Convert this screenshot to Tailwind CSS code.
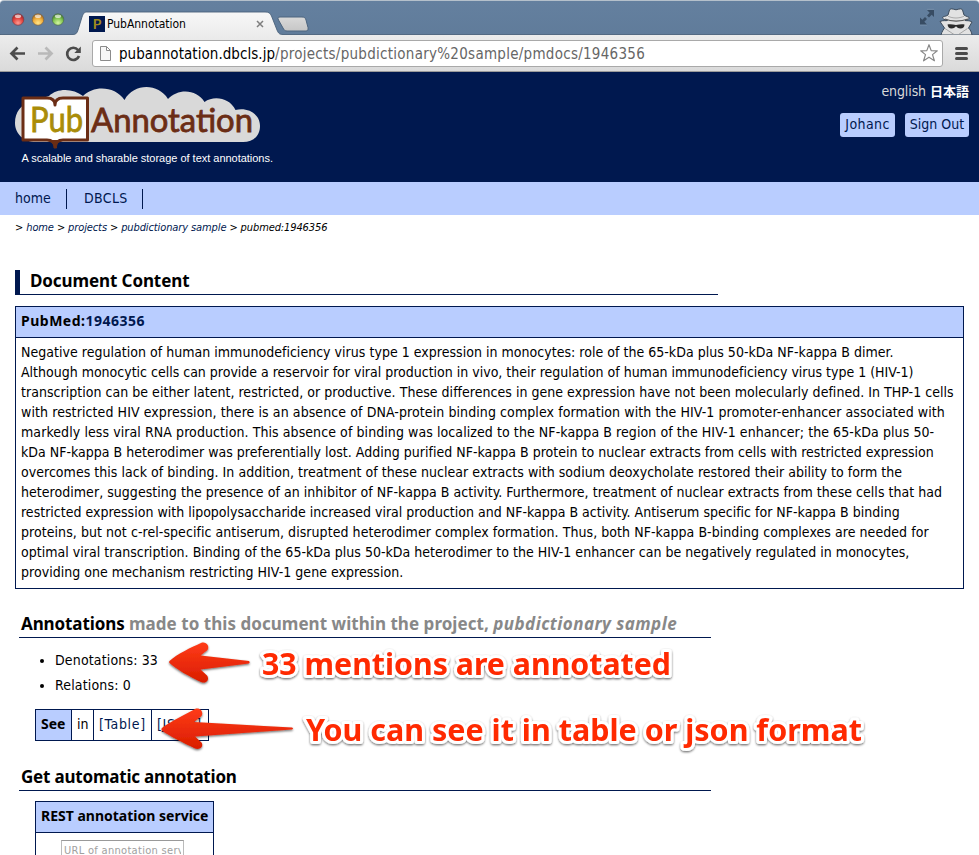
<!DOCTYPE html>
<html lang="en">
<head>
<meta charset="utf-8">
<title>PubAnnotation</title>
<script src="https://cdn.jsdelivr.net/npm/@tailwindcss/browser@4"></script>
</head>
<body class="bg-white">
<div class="relative w-[979px] h-[855px] overflow-hidden bg-white text-black text-[14px] leading-5 whitespace-nowrap font-['DejaVu_Sans_Condensed','DejaVu_Sans','Noto_Sans_CJK_JP',sans-serif]">

  <!-- Browser window -->
  <header class="bg-linear-to-b from-[#64809f] to-[#5c7795] border-t border-[#b4c0cb] rounded-t-[4px] h-[72px] flex flex-col">
    <div class="relative h-[34px] flex items-center">
      <svg class="block" width="979" height="34" viewBox="0 1 979 34">
        <defs>
          <linearGradient id="tab" x1="0" y1="0" x2="0" y2="1"><stop offset="0" stop-color="#f7f7f7"/><stop offset="1" stop-color="#ececec"/></linearGradient>
          <linearGradient id="nt" x1="0" y1="0" x2="0" y2="1"><stop offset="0" stop-color="#d9d9d9"/><stop offset="1" stop-color="#c6c6c6"/></linearGradient>
          <radialGradient id="r" cx=".5" cy=".8" r=".7"><stop offset="0" stop-color="#ff9a92"/><stop offset=".6" stop-color="#e2463f"/><stop offset="1" stop-color="#a3262a"/></radialGradient>
          <radialGradient id="y" cx=".5" cy=".8" r=".7"><stop offset="0" stop-color="#ffe58a"/><stop offset=".6" stop-color="#f0ae3c"/><stop offset="1" stop-color="#a96d1c"/></radialGradient>
          <radialGradient id="g" cx=".5" cy=".8" r=".7"><stop offset="0" stop-color="#d4f5a2"/><stop offset=".6" stop-color="#83c552"/><stop offset="1" stop-color="#44802a"/></radialGradient>
        </defs>
        <g stroke-width=".7">
          <circle cx="18" cy="19.5" r="5.8" fill="url(#r)" stroke="#7b3d49"/>
          <circle cx="38" cy="19.5" r="5.8" fill="url(#y)" stroke="#7d6446"/>
          <circle cx="58" cy="19.5" r="5.8" fill="url(#g)" stroke="#4d6e51"/>
        </g>
        <g fill="#fff" opacity=".65"><ellipse cx="18" cy="16.3" rx="3.2" ry="1.8"/><ellipse cx="38" cy="16.3" rx="3.2" ry="1.8"/><ellipse cx="58" cy="16.3" rx="3.2" ry="1.8"/></g>
        <path d="M0 34.5H73C76 34.5 77 33 78 30L82 17C83.5 13 84.500 12 87 12H265C269 12 270 13 271.500 16L277 30C278.500 33.500 279.500 34.500 283 34.500H979V36H0Z" fill="url(#tab)" stroke="#49617b" stroke-width=".9"/>
        <path d="M280 17H302C304.500 17 305.500 18 306 20L308 27.500C308.500 30 307.500 31 306 31H287C285 31 284 30 283 28L278.500 20C277.500 18 278 17 280 17Z" fill="url(#nt)" stroke="#4c647e"/>
        <path d="M257 21l6 6M263 21l-6 6" stroke="#7e7e7e" stroke-width="1.5"/>
        <g fill="#384c63"><path d="M927 10h7v7l-2.300-2.300-2.700 2.700-2-2 2.700-2.700z"/><path d="M920 24.500v-7l2.300 2.300 2.700-2.700 2 2-2.700 2.700 2.700 2.700z"/></g>
        <path d="M920 25.200h7M927 9.300h7" stroke="#8da3ba" stroke-width=".6" opacity=".6"/>
        <g>
          <path d="M941 35C942 31 944 29 944.500 28L940 21.500C943 20 946 21 947.500 20.500C943 19.500 941.500 17.500 943 17C945 16 947 16 948 15L949.500 10C950 8.500 952 8.600 956 9.800C960 8.600 962 8.500 962.500 10L964 15C966 16.500 969.500 17 969.500 18C969 19.500 966 20 965 20.500C967 21 969 20 972 22L968.500 28C970.500 30 971.500 32 972 35Z" fill="#e2e2e2" stroke="#3d4c5c" stroke-width="1"/>
          <path d="M948 16.200C953 18.600 959 18.600 964 16.200" fill="none" stroke="#9a9a9a" stroke-width=".8"/>
          <path d="M945 19C951 21.800 961 21.800 968 19" fill="none" stroke="#5a5a5a" stroke-width="1.300"/>
          <path d="M947.500 24.500C950 23.800 953 24.400 956 25C959 24.400 962 23.800 964.500 24.500C964.500 27.500 963 28.400 960.500 28.400C958 28.400 957 27 956 26.200C955 27 954 28.400 951.500 28.400C949 28.400 948 27.500 947.500 24.500Z" fill="#2b2b2b"/>
          <path d="M945 28.500l9 6M967.500 28.500l-9 6" stroke="#999" stroke-width=".8"/>
        </g>
      </svg>
      <div class="absolute left-[89px] top-[14px] flex items-center gap-[2px]">
        <span class="w-4 h-4 bg-[#00184f] text-[#a08a1c] text-[14px] leading-4 text-center font-bold font-['Lato',sans-serif]">P</span>
        <span class="text-[12px] leading-[17px] pt-px tracking-[-0.02px]">PubAnnotation</span>
      </div>
    </div>
    <div class="h-[37px] bg-linear-to-b from-[#ececec] to-[#dadada] border-b border-[#9b9b9b] flex items-center">
      <svg width="92" height="36" viewBox="0 35 92 36" fill="none" class="shrink-0">
        <path d="M11 53.500H25M17.500 47.500L11.500 53.500L17.500 59.500" stroke="#4c4c4c" stroke-width="2.700"/>
        <path d="M38 53.500H52M45.500 47.500L51.500 53.500L45.500 59.500" stroke="#b9b9b9" stroke-width="2.700"/>
        <path d="M78 50A6.100 6.100 0 1 0 79 56" stroke="#4c4c4c" stroke-width="2.700"/><path d="M80.800 46.500V53H74.300Z" fill="#4c4c4c"/>
      </svg>
      <div class="w-[851px] h-[27px] bg-white border border-[#a9a9a9] rounded-[3px] flex items-center pl-[6px] pr-[3px] text-[15px]">
        <svg width="14" height="17" viewBox="0 0 14 17" class="mr-[6px]" fill="#f7f7f7" stroke="#8b8b8b"><path d="M1.500 1.500H7.500L11.500 5.500V15.500H1.500ZM7.500 1.500V5.500H11.500"/></svg>
        <span class="relative top-[1px] tracking-[0.05px]">pubannotation.dbcls.jp</span><span class="relative top-[1px] text-[#666] tracking-[0.27px]">/projects/pubdictionary%20sample/pmdocs/1946356</span>
        <svg width="20" height="20" viewBox="0 0 20 20" class="ml-auto" fill="#fff" stroke="#888" stroke-width="1.200" stroke-linejoin="round"><path d="M10 1.700L12.200 7.600L18.300 7.800L13.500 11.600L15.400 17.800L10 14.200L4.600 17.800L6.500 11.600L1.700 7.800L7.800 7.600Z"/></svg>
      </div>
      <div class="ml-3 w-[13px] flex flex-col gap-[2px]"><i class="h-[3px] rounded-full bg-[#4b4b4b]"></i><i class="h-[3px] rounded-full bg-[#4b4b4b]"></i><i class="h-[3px] rounded-full bg-[#4b4b4b]"></i></div>
    </div>
  </header>

  <!-- Site banner -->
  <div class="h-[110px] bg-[#00184f] flex justify-between">
    <svg width="300" height="110" viewBox="0 72 300 110">
      <path d="M36 142C24 142 15 134 15 123C15 112 21 105 30 102L49 96C57 88 73 88 83 96C94 85 115 86 124.500 100C134 83 158 83 168 99C178 88 197 89 204.500 102C214 95 230 98 235.500 110C248 107 260 114 260 126C260 136 253 142 243 142Z" fill="#d9d9d9"/>
      <path d="M23 98H47C52 98 55 100 55 105C55 100 58 98 63 98H87.500V140H63C58 140 55 143 55 146C55 143 52 140 47 140H23Z" fill="#fff" stroke="#6b2d15" stroke-width="3" stroke-linejoin="round"/>
      <path d="M48 140.500C52 141 54 144 54 148H56.500C56.500 144 58 141 62 140.500Z" fill="#6b2d15" stroke="#6b2d15"/>
      <text x="30" y="132" textLength="53" lengthAdjust="spacingAndGlyphs" font-family="Lato" font-size="34" fill="#a98c08" stroke="#a98c08" stroke-width=".8">Pub</text>
      <text x="91" y="132" textLength="162" lengthAdjust="spacingAndGlyphs" font-family="Lato" font-size="33" fill="#6b2d15" stroke="#6b2d15" stroke-width=".8">Annotation</text>
      <text x="21.500" y="162" textLength="251.500" font-family="Liberation Sans" font-size="11" fill="#fff">A scalable and sharable storage of text annotations.</text>
    </svg>
    <div class="pr-[10px] pt-[9px] flex flex-col items-end">
      <div class="flex gap-1 text-[#d9d9d9]"><span class="tracking-[-0.1px]">english</span><span class="text-white text-[13px] font-bold font-['Noto_Sans_CJK_JP',sans-serif]">日本語</span></div>
      <div class="flex gap-[10px] mt-3 text-[#00184f]">
        <span class="w-[55px] h-6 leading-[23px] rounded-[3px] bg-[#b9cdff] text-center tracking-[0.4px]">Johanc</span>
        <span class="w-[64px] h-6 leading-[23px] rounded-[3px] bg-[#b9cdff] text-center">Sign Out</span>
      </div>
    </div>
  </div>
  <nav class="h-[33px] bg-[#b9cdff] flex items-center text-[#00184f]">
    <span class="w-[67px] pl-[15px] border-r border-[#00184f] leading-[19px] pb-px">home</span>
    <span class="w-[76px] pl-[17px] border-r border-[#00184f] leading-[19px] pb-px tracking-[0.35px]">DBCLS</span>
  </nav>
  <div class="pl-[15px] pt-[3px] h-[55px] text-[11px] italic tracking-[-0.11px]">&gt; <span class="text-[#00184f]">home</span> &gt; <span class="text-[#00184f]">projects</span> &gt; <span class="text-[#00184f]">pubdictionary sample</span> &gt; pubmed:1946356</div>

  <main class="px-[15px]">
    <h1 class="w-[703px] h-[25px] border-l-5 border-b border-[#00184f] pl-[10px] leading-[22px] text-[17px] font-bold font-['Noto_Sans',sans-serif] tracking-[-0.1px]">Document Content</h1>
    <section class="mt-[11px] border border-[#00184f] w-[949px] h-[283px]">
      <h2 class="h-[31px] leading-[28px] bg-[#b9cdff] border-b border-[#00184f] pl-[5px] font-bold font-['Noto_Sans',sans-serif] tracking-[0.5px]">PubMed:<span class="text-[#00184f]">1946356</span></h2>
      <div class="pl-[5px] pt-1">
        <p class="tracking-[0.025px]">Negative regulation of human immunodeficiency virus type 1 expression in monocytes: role of the 65-kDa plus 50-kDa NF-kappa B dimer.</p>
        <p class="tracking-[-0.005px]">Although monocytic cells can provide a reservoir for viral production in vivo, their regulation of human immunodeficiency virus type 1 (HIV-1)</p>
        <p class="tracking-[0.03px]">transcription can be either latent, restricted, or productive. These differences in gene expression have not been molecularly defined. In THP-1 cells</p>
        <p class="tracking-[0.09px]">with restricted HIV expression, there is an absence of DNA-protein binding complex formation with the HIV-1 promoter-enhancer associated with</p>
        <p class="tracking-[0.08px]">markedly less viral RNA production. This absence of binding was localized to the NF-kappa B region of the HIV-1 enhancer; the 65-kDa plus 50-</p>
        <p class="tracking-[0.015px]">kDa NF-kappa B heterodimer was preferentially lost. Adding purified NF-kappa B protein to nuclear extracts from cells with restricted expression</p>
        <p class="tracking-[0.035px]">overcomes this lack of binding. In addition, treatment of these nuclear extracts with sodium deoxycholate restored their ability to form the</p>
        <p class="tracking-[0.04px]">heterodimer, suggesting the presence of an inhibitor of NF-kappa B activity. Furthermore, treatment of nuclear extracts from these cells that had</p>
        <p class="tracking-[0.005px]">restricted expression with lipopolysaccharide increased viral production and NF-kappa B activity. Antiserum specific for NF-kappa B binding</p>
        <p class="tracking-[0.06px]">proteins, but not c-rel-specific antiserum, disrupted heterodimer complex formation. Thus, both NF-kappa B-binding complexes are needed for</p>
        <p class="tracking-[0.02px]">optimal viral transcription. Binding of the 65-kDa plus 50-kDa heterodimer to the HIV-1 enhancer can be negatively regulated in monocytes,</p>
        <p class="tracking-[0.03px]">providing one mechanism restricting HIV-1 gene expression.</p>
      </div>
    </section>

    <h2 class="ml-1 mt-[23px] w-[692px] h-[26px] border-b border-[#00184f] pl-[2px] leading-6 text-[17px] font-bold font-['Noto_Sans',sans-serif] tracking-[-0.1px]">Annotations <span class="text-[#888] tracking-[0.04px]">made to this document within the project, <em class="tracking-[0.45px]">pubdictionary sample</em></span></h2>
    <ul class="ml-[40px] mt-[10px] h-[50px] leading-[25px] list-disc">
      <li class="tracking-[0.15px]">Denotations: 33</li>
      <li class="tracking-[0.15px]">Relations: 0</li>
    </ul>
    <div class="ml-5 mt-[11px] h-8 w-[174px] border border-[#00184f] flex leading-[29px]">
      <b class="w-[36px] pl-[5px] bg-[#b9cdff] border-r border-[#00184f] leading-[28px] font-['Noto_Sans',sans-serif]">See</b>
      <span class="w-[22px] pl-[5px] border-r border-[#00184f]">in</span>
      <span class="w-[58px] pl-[5px] border-r border-[#00184f] text-[#00184f] tracking-[0.65px]">[Table]</span>
      <span class="pl-[5px] text-[#00184f] tracking-[0.65px]">[JSON]</span>
    </div>
    <h2 class="ml-1 mt-[24px] w-[692px] h-[26px] border-b border-[#00184f] pl-[2px] leading-6 text-[17px] font-bold font-['Noto_Sans',sans-serif] tracking-[-0.2px]">Get automatic annotation</h2>
    <section class="ml-5 mt-[10px] w-[179px] h-[120px] border border-[#00184f]">
      <h3 class="h-[31px] leading-[28px] bg-[#b9cdff] border-b border-[#00184f] pl-[5px] font-bold font-['Noto_Sans',sans-serif]">REST annotation service</h3>
      <div class="ml-[25px] mt-[7px] w-[123px] h-[22px] border border-t-[#999] border-[#bbb] px-[2px] leading-[19px]"><span class="block overflow-hidden text-[11px] text-[#a0a0a0] tracking-[0.3px]">URL of annotation service</span></div>
    </section>
  </main>

  <!-- Callouts drawn over the page -->
  <svg class="absolute left-0 top-[630px]" width="979" height="140" viewBox="0 630 979 140">
    <defs>
      <linearGradient id="red" x1="0" y1="0" x2="0" y2="1"><stop offset="0" stop-color="#ff3b18"/><stop offset="1" stop-color="#d91d00"/></linearGradient>
      <filter id="sh" x="-10%" y="-20%" width="120%" height="150%"><feDropShadow dx="0" dy="1.200" stdDeviation=".9" flood-color="#000" flood-opacity=".6"/></filter>
    </defs>
    <g fill="url(#red)" filter="url(#sh)">
      <path d="M169.500 661C177 654 192 647 201 643C206 641 210 646 207.500 650L200.500 655.500L249 661Q250.500 662 249 663.500L200.500 669.500L207 675.500C210 680 206 684 201 682C190 677 176 669 169.500 663Q168.500 662 169.500 661Z"/>
      <path d="M162 728C171 721 188 713 195 709C200 707 204 712 201.500 716L194 722L292 727.500Q294 728.500 292 729.500L195 736.500L201.500 742.500C204 747 200 750 195 748.500C184 743 169 736 162 730.500Q161 729 162 728Z"/>
    </g>
    <g font-family="Noto Sans" font-weight="bold" font-size="30" fill="#ff2a06">
      <g filter="url(#sh)" stroke="#fff" stroke-width="6" stroke-linejoin="round" paint-order="stroke">
        <text x="262" y="674.500" textLength="409" lengthAdjust="spacingAndGlyphs">33 mentions are annotated</text>
        <text x="306" y="740.500" textLength="556" lengthAdjust="spacingAndGlyphs">You can see it in table or json format</text>
      </g>
    </g>
  </svg>
</div>
</body>
</html>
